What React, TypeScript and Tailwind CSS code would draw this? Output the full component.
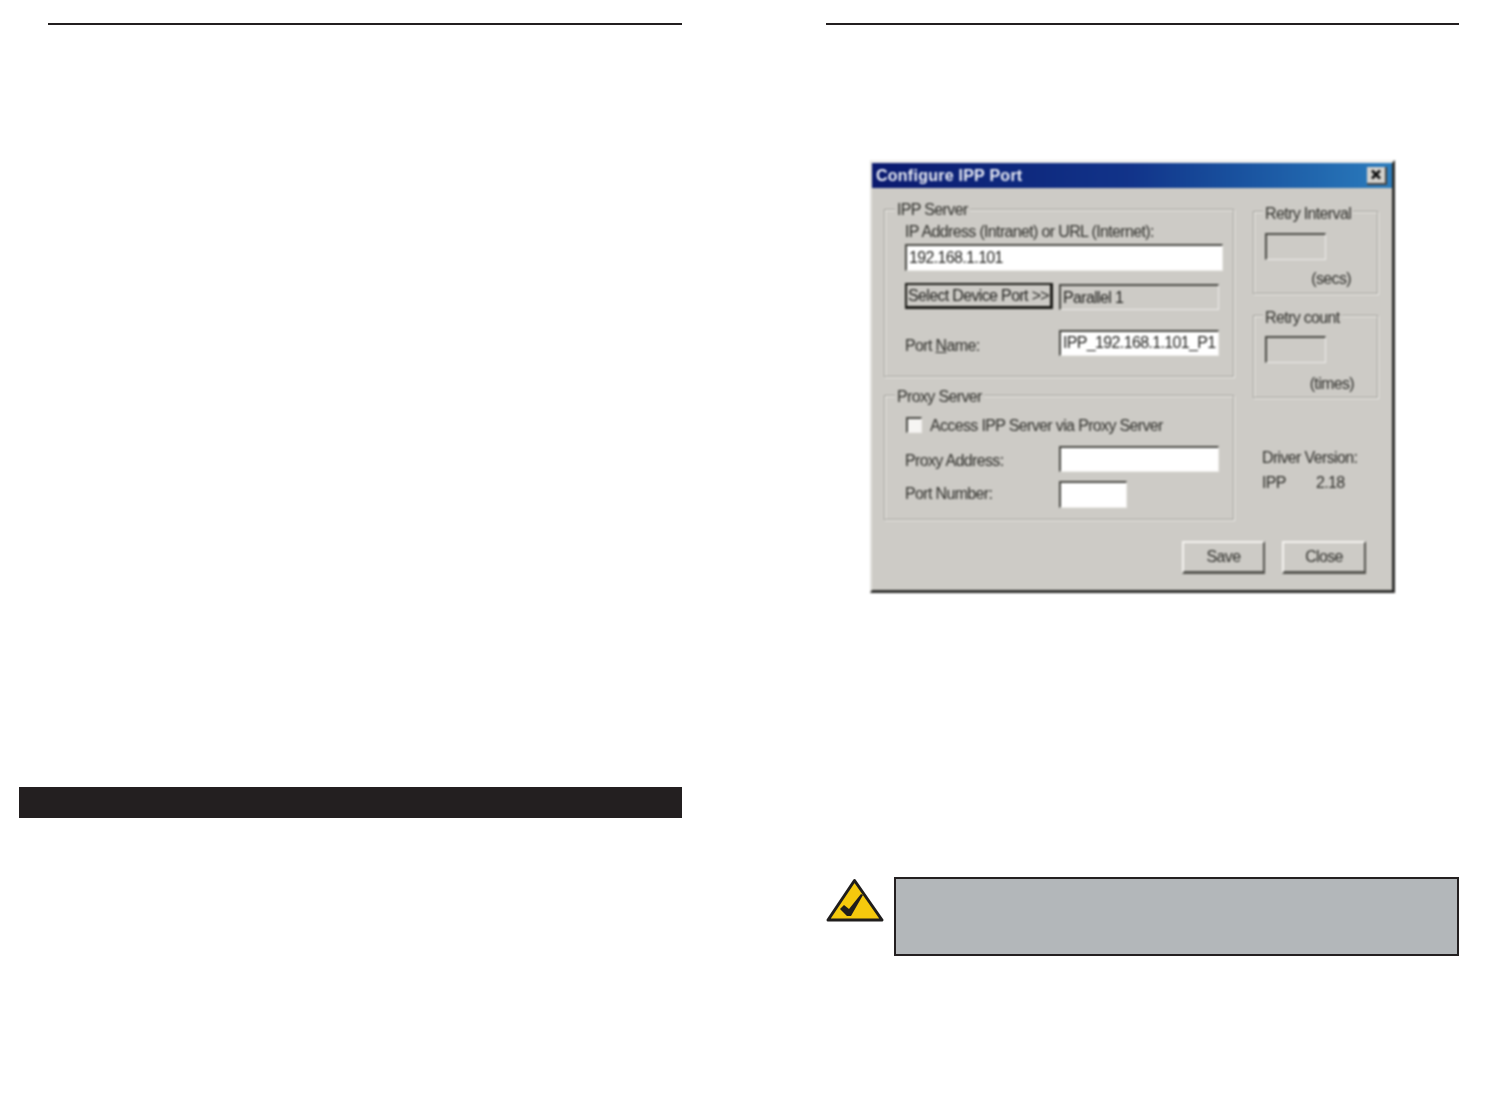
const sunken = "border-t-2 border-l-2 border-r border-b border-t-[#4a4a45] border-l-[#4a4a45] border-r-[#eeede9] border-b-[#eeede9]";

function Group({ legend, className, legendPos, children }: { legend: string; className: string; legendPos: string; children: React.ReactNode }) {
  return (
    <div className={`relative border border-[#a3a19c] shadow-[1px_1px_0_#efeeea,inset_1px_1px_0_#efeeea] ${className}`}>
      <span className={`absolute bg-[#cdcbc6] px-[2px] leading-[18px] ${legendPos}`}>{legend}</span>
      {children}
    </div>
  );
}

function Field({ className, children }: { className: string; children?: React.ReactNode }) {
  return (
    <div className={`${sunken} pl-[2px] leading-[22px] whitespace-nowrap overflow-hidden ${className}`}>{children}</div>
  );
}

function DialogButton({ label, width }: { label: string; width: string }) {
  return (
    <div className={`flex h-[33px] items-center justify-center border-t-2 border-l-2 border-r-2 border-b-[3px] border-t-[#f4f3f0] border-l-[#f4f3f0] border-r-[#55544f] border-b-[#55544f] ${width}`}>
      {label}
    </div>
  );
}

function ConfigureDialog() {
  return (
    <div className="ml-[44px] mt-[135px] h-[433px] w-[525px] border-t-[3px] border-l-2 border-r-[3px] border-b-[3px] border-t-[#f2f1ee] border-l-[#e4e3df] border-r-[#2e2e2c] border-b-[#2e2e2c] bg-[#cdcbc6] font-['Liberation_Sans',sans-serif] text-[16px] tracking-[-0.65px] text-[#2f2f2b] blur-[0.8px]">
      <div className="flex h-[25px] items-center justify-between bg-gradient-to-r from-[#0b1a6f] via-[#12348a] to-[#2b7cbd] pl-[4px] pr-[5px]">
        <span className="text-[16px] font-bold tracking-[0.25px] text-[#eef0f8]">Configure IPP Port</span>
        <div className="flex h-[18px] w-[20px] items-center justify-center border-r-2 border-b-2 border-r-[#444] border-b-[#444] bg-[#d3d1cc]">
          <svg width="12" height="11" viewBox="0 0 12 11">
            <path d="M2 1.5 L10 9.5 M10 1.5 L2 9.5" stroke="#111" strokeWidth="2.6" />
          </svg>
        </div>
      </div>

      <div className="flex pl-[12px]">
        <div className="w-[350px]">
          <Group legend="IPP Server" legendPos="left-[10px] -top-[9px]" className="mt-[21px] h-[168px] pl-[20px] pt-[12px]">
            <div className="h-[22px] leading-[19px]">IP Address (Intranet) or URL (Internet):</div>
            <Field className="h-[27px] w-[318px] bg-white pt-[1px] text-[#1f1f1c]">192.168.1.101</Field>
            <div className="mt-[12px] flex items-start">
              <div className="flex h-[26px] w-[148px] items-center justify-center overflow-hidden border-2 border-[#1a1a16] border-r-[3px] border-b-[3px] whitespace-nowrap text-[#1f1f1c]">
                Select Device Port &gt;&gt;
              </div>
              <Field className="ml-[6px] mt-[1px] h-[26px] w-[160px] pt-[1px] text-[#1f1f1c]">Parallel 1</Field>
            </div>
            <div className="mt-[20px] flex h-[26px] items-center">
              <span className="w-[154px] pt-[6px] leading-[18px]">
                Port <span className="underline">N</span>ame:
              </span>
              <Field className="h-[26px] w-[160px] bg-white text-[#1f1f1c]">IPP_192.168.1.101_P1</Field>
            </div>
          </Group>
          <Group legend="Proxy Server" legendPos="left-[10px] -top-[8px]" className="mt-[18px] h-[125px] pl-[20px] pt-[21px]">
            <div className="flex h-[16px] items-center">
              <div className={`${sunken} ml-[1px] h-[16px] w-[16px] bg-[#f6f5f3]`} />
              <span className="ml-[8px] pt-[1px] leading-[15px]">Access IPP Server via Proxy Server</span>
            </div>
            <div className="mt-[13px] flex h-[26px] items-center">
              <span className="w-[154px] pt-[4px] leading-[18px]">Proxy Address:</span>
              <Field className="h-[26px] w-[160px] bg-white" />
            </div>
            <div className="mt-[9px] flex h-[27px] items-center">
              <span className="w-[154px] pb-[2px] leading-[18px]">Port Number:</span>
              <Field className="h-[27px] w-[68px] bg-white" />
            </div>
          </Group>
        </div>

        <div className="ml-[19px] w-[125px]">
          <Group legend="Retry Interval" legendPos="left-[9px] -top-[7px]" className="mt-[23px] h-[83px] pl-[11px] pt-[21px]">
            <Field className="h-[27px] w-[61px]" />
            <div className="mt-[9px] pr-[26px] text-right leading-[20px]">(secs)</div>
          </Group>
          <Group legend="Retry count" legendPos="left-[9px] -top-[7px]" className="mt-[21px] h-[83px] pl-[11px] pt-[20px]">
            <Field className="h-[27px] w-[61px]" />
            <div className="mt-[11px] pr-[23px] text-right leading-[20px]">(times)</div>
          </Group>
          <div className="ml-[9px] mt-[47px] leading-[25px]">
            <div>Driver Version:</div>
            <div className="flex">
              <span className="w-[54px]">IPP</span>
              <span>2.18</span>
            </div>
          </div>
        </div>
      </div>

      <div className="mt-[21px] flex justify-end gap-[17px] pr-[26px]">
        <DialogButton label="Save" width="w-[83px]" />
        <DialogButton label="Close" width="w-[84px]" />
      </div>
    </div>
  );
}

function NoteIcon() {
  return (
    <svg width="58" height="44" viewBox="0 0 58 44" className="mt-[1px] shrink-0">
      <path d="M28.5 2.5 L56 42 H2 Z" fill="#f5c90d" stroke="#1f1d1c" strokeWidth="3" strokeLinejoin="round" />
      <path d="M14 31 L18 27 L23 31 L35 16 L37 17 L25 38 L21 38 Z" fill="#1f1d1c" />
    </svg>
  );
}

export default function App() {
  return (
    <div className="flex h-[1109px] w-[1508px] overflow-hidden bg-white">
      <div className="ml-[19px] w-[663px] shrink-0">
        <div className="ml-[29px] mt-[23px] h-[2px] bg-[#231f20]" />
        <div className="mt-[762px] h-[31px] bg-[#231f20]" />
      </div>
      <div className="ml-[144px] w-[633px] shrink-0">
        <div className="mt-[23px] h-[2px] bg-[#231f20]" />
        <ConfigureDialog />
        <div className="mt-[284px] flex items-start">
          <NoteIcon />
          <div className="ml-[10px] h-[79px] flex-1 border-2 border-[#231f20] bg-[#b3b7ba]" />
        </div>
      </div>
    </div>
  );
}
